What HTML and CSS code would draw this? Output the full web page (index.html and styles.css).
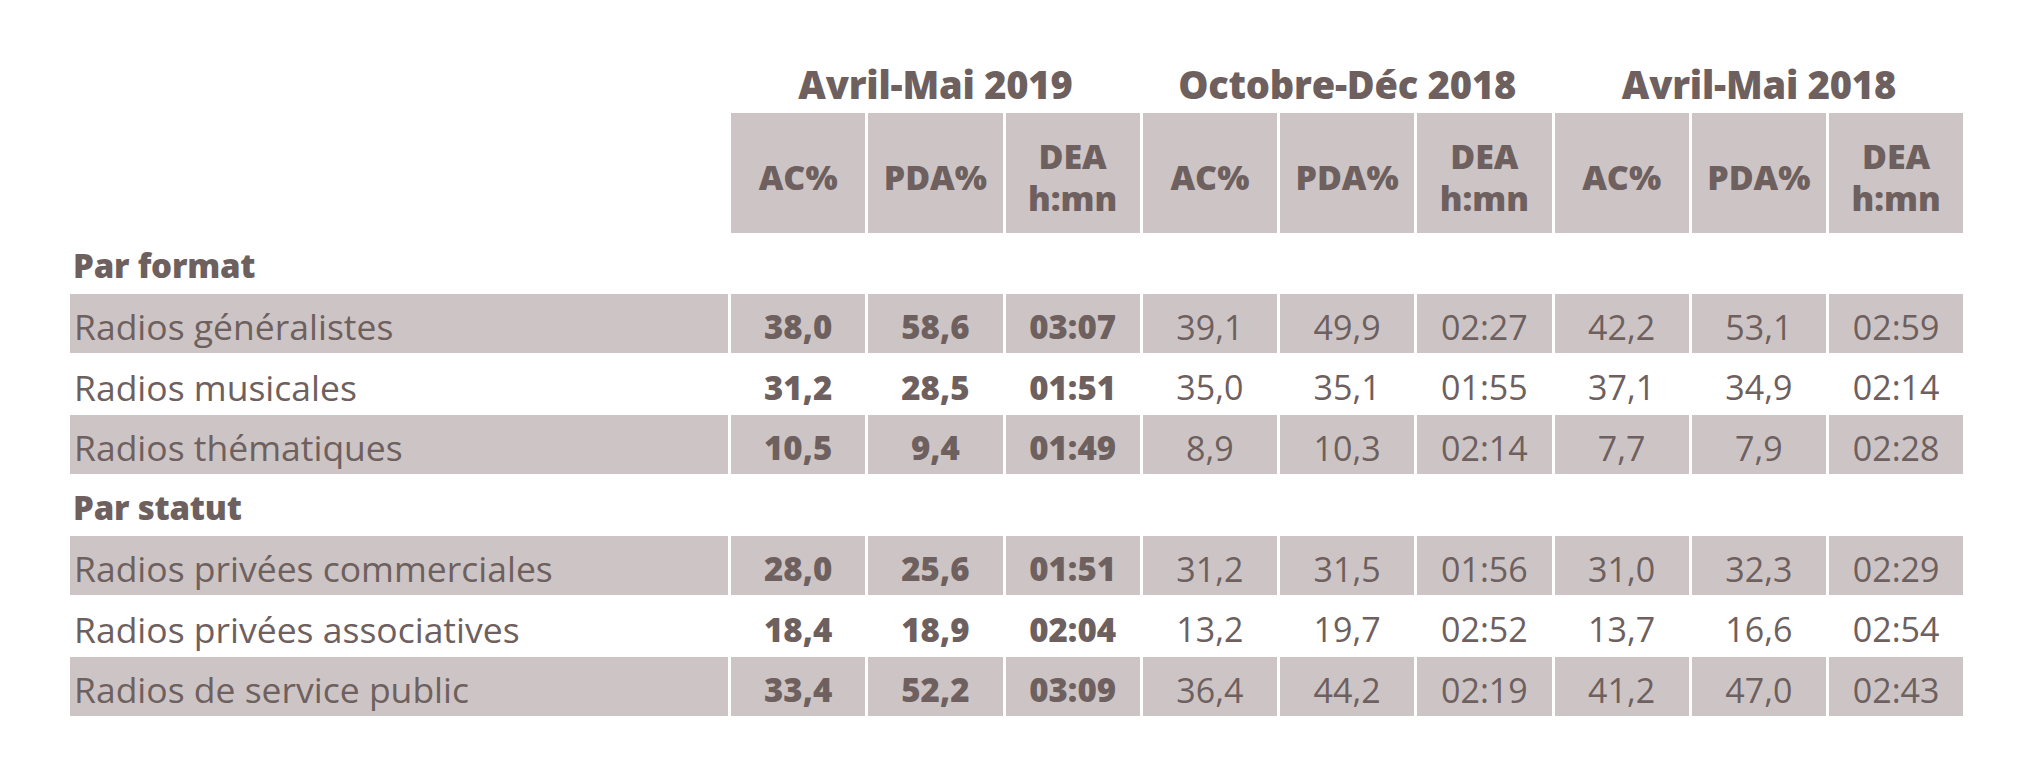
FILE: index.html
```html
<!DOCTYPE html>
<html lang="fr">
<head>
<meta charset="utf-8">
<title>Audience radio</title>
<link rel="stylesheet" href="styles.css">
</head>
<body>
<div class="table">
  <div class="blank"></div>
  <div class="group">Avril-Mai 2019</div>
  <div class="group">Octobre-Déc 2018</div>
  <div class="group">Avril-Mai 2018</div>

  <div class="blank"></div>
  <div class="hcell">AC%</div>
  <div class="hcell">PDA%</div>
  <div class="hcell">DEA<br>h:mn</div>
  <div class="hcell">AC%</div>
  <div class="hcell">PDA%</div>
  <div class="hcell">DEA<br>h:mn</div>
  <div class="hcell">AC%</div>
  <div class="hcell">PDA%</div>
  <div class="hcell">DEA<br>h:mn</div>

  <div class="section">Par format</div>

  <div class="label shade">Radios généralistes</div>
  <div class="num strong shade">38,0</div><div class="num strong shade">58,6</div><div class="num strong shade">03:07</div>
  <div class="num shade">39,1</div><div class="num shade">49,9</div><div class="num shade">02:27</div>
  <div class="num shade">42,2</div><div class="num shade">53,1</div><div class="num shade">02:59</div>

  <div class="label">Radios musicales</div>
  <div class="num strong">31,2</div><div class="num strong">28,5</div><div class="num strong">01:51</div>
  <div class="num">35,0</div><div class="num">35,1</div><div class="num">01:55</div>
  <div class="num">37,1</div><div class="num">34,9</div><div class="num">02:14</div>

  <div class="label shade">Radios thématiques</div>
  <div class="num strong shade">10,5</div><div class="num strong shade">9,4</div><div class="num strong shade">01:49</div>
  <div class="num shade">8,9</div><div class="num shade">10,3</div><div class="num shade">02:14</div>
  <div class="num shade">7,7</div><div class="num shade">7,9</div><div class="num shade">02:28</div>

  <div class="section">Par statut</div>

  <div class="label shade">Radios privées commerciales</div>
  <div class="num strong shade">28,0</div><div class="num strong shade">25,6</div><div class="num strong shade">01:51</div>
  <div class="num shade">31,2</div><div class="num shade">31,5</div><div class="num shade">01:56</div>
  <div class="num shade">31,0</div><div class="num shade">32,3</div><div class="num shade">02:29</div>

  <div class="label">Radios privées associatives</div>
  <div class="num strong">18,4</div><div class="num strong">18,9</div><div class="num strong">02:04</div>
  <div class="num">13,2</div><div class="num">19,7</div><div class="num">02:52</div>
  <div class="num">13,7</div><div class="num">16,6</div><div class="num">02:54</div>

  <div class="label shade">Radios de service public</div>
  <div class="num strong shade">33,4</div><div class="num strong shade">52,2</div><div class="num strong shade">03:09</div>
  <div class="num shade">36,4</div><div class="num shade">44,2</div><div class="num shade">02:19</div>
  <div class="num shade">41,2</div><div class="num shade">47,0</div><div class="num shade">02:43</div>
</div>
</body>
</html>
```

FILE: styles.css
```css
html, body {
  margin: 0;
  padding: 0;
  background: #ffffff;
}

body {
  font-family: "Open Sans", "Noto Sans", sans-serif;
  color: #6d605e;
}

.table {
  display: grid;
  grid-template-columns: 658px repeat(9, 134.25px);
  grid-template-rows: 56px 120px repeat(8, 60.5px);
  column-gap: 3px;
  margin: 57px 0 0 70px;
}

.group {
  grid-column: span 3;
  display: flex;
  align-items: center;
  justify-content: center;
  font-weight: 800;
  font-size: 38px;
  line-height: 1;
  letter-spacing: -0.2px;
  padding-bottom: 2px;
}

.hcell {
  background: #cdc5c5;
  display: flex;
  align-items: center;
  justify-content: center;
  text-align: center;
  font-weight: 800;
  font-size: 34px;
  line-height: 42px;
  padding-top: 8px;
  box-sizing: border-box;
}

.section {
  grid-column: 1 / -1;
  display: flex;
  align-items: center;
  padding: 4px 0 0 3px;
  font-weight: 800;
  font-size: 33px;
  line-height: 1;
  letter-spacing: -0.2px;
}

.label,
.num {
  display: flex;
  align-items: center;
  box-sizing: border-box;
  border-bottom: 1.5px solid transparent;
  background-clip: padding-box;
  padding-top: 7px;
  line-height: 1;
}

.label {
  padding-left: 4px;
  font-size: 35.5px;
}

.num {
  justify-content: center;
  font-size: 34px;
}

.strong {
  font-weight: 800;
  font-size: 33px;
}

.shade {
  background-color: #cdc5c5;
}
```
